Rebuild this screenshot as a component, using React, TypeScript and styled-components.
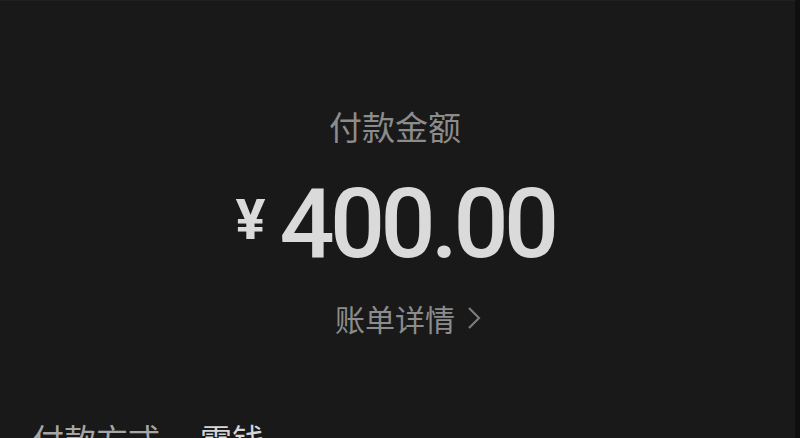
import React, { FC } from 'react'
import styled, { createGlobalStyle } from 'styled-components'

const GlobalStyle = createGlobalStyle`
  html, body {
    margin: 0;
    padding: 0;
    background: #191919;
  }
  body {
    font-family: Roboto, "Noto Sans CJK SC", sans-serif;
  }
`

const Screen = styled.div`
  display: flex;
  width: 800px;
  height: 438px;
  overflow: hidden;
  background: #191919;
`

const Main = styled.div`
  flex: 1;
  display: flex;
  flex-direction: column;
`

const Edge = styled.div`
  width: 5px;
  background: #0f0f0f;
`

const TopBar = styled.div`
  height: 19px;
  border-bottom: 1px solid #202020;
`

const Summary = styled.div`
  display: flex;
  flex-direction: column;
  align-items: center;
  padding-top: 109px;
  padding-right: 5px;
`

const Label = styled.div`
  font-family: "Noto Sans CJK SC", sans-serif;
  font-size: 33px;
  line-height: 33px;
  color: #8c8c8c;
`

const Amount = styled.div`
  display: flex;
  align-items: center;
  margin-top: 26px;
  color: #dadada;
  font-family: Roboto, sans-serif;
`

const Currency = styled.span`
  font-size: 56px;
  line-height: 56px;
  font-weight: 700;
  margin-right: 14px;
  margin-top: -8px;
`

const Value = styled.span`
  font-size: 97px;
  line-height: 110px;
  font-weight: 500;
  letter-spacing: -4.6px;
`

const DetailLink = styled.div`
  display: flex;
  align-items: center;
  gap: 12px;
  margin-top: 24px;
  padding-left: 26px;
  font-family: "Noto Sans CJK SC", sans-serif;
  font-size: 30px;
  line-height: 30px;
  color: #8c8c8c;
`

const Row = styled.div`
  display: flex;
  align-items: center;
  margin-top: 88px;
  padding-left: 32px;
  font-family: "Noto Sans CJK SC", sans-serif;
  font-size: 32px;
  line-height: 34px;
`

const RowLabel = styled.span`
  width: 168px;
  color: #a6a6a6;
`

const RowValue = styled.span`
  color: #d6d6d6;
`

const Chevron: FC = () => (
  <svg width="14" height="24" viewBox="0 0 14 24" fill="none">
    <path d="M2 2l10 10L2 22" stroke="#7c7c7c" strokeWidth="2.2" />
  </svg>
)

const App: FC = () => (
  <>
    <GlobalStyle />
    <Screen>
      <Main>
        <TopBar />
        <Summary>
          <Label>付款金额</Label>
          <Amount>
            <Currency>¥</Currency>
            <Value>400.00</Value>
          </Amount>
          <DetailLink>
            账单详情
            <Chevron />
          </DetailLink>
        </Summary>
        <Row>
          <RowLabel>付款方式</RowLabel>
          <RowValue>零钱</RowValue>
        </Row>
      </Main>
      <Edge />
    </Screen>
  </>
)

export default App
